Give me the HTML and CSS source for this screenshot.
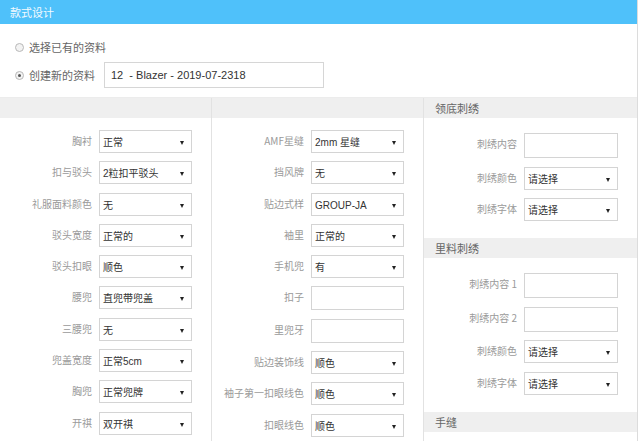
FILE: index.html
```html
<!DOCTYPE html>
<html lang="zh">
<head>
<meta charset="utf-8">
<title>款式设计</title>
<link rel="stylesheet" href="styles.css">
</head>
<body>
<div class="panel">
  <div class="panel-head">款式设计</div>
  <div class="choice-area">
    <div class="radio-row"><span class="radio"></span><span>选择已有的资料</span></div>
    <div class="radio-row second"><span class="radio checked"></span><span>创建新的资料</span><div class="text-input">12&nbsp; - Blazer - 2019-07-2318</div></div>
  </div>
  <div class="columns">
    <div class="col">
      <div class="band"></div>
      <div class="rows">
        <div class="row"><span class="lbl">胸衬</span><div class="sel">正常<i class="arr"></i></div></div>
        <div class="row"><span class="lbl">扣与驳头</span><div class="sel">2粒扣平驳头<i class="arr"></i></div></div>
        <div class="row"><span class="lbl">礼服面料颜色</span><div class="sel">无<i class="arr"></i></div></div>
        <div class="row"><span class="lbl">驳头宽度</span><div class="sel">正常的<i class="arr"></i></div></div>
        <div class="row"><span class="lbl">驳头扣眼</span><div class="sel">顺色<i class="arr"></i></div></div>
        <div class="row"><span class="lbl">腰兜</span><div class="sel">直兜带兜盖<i class="arr"></i></div></div>
        <div class="row"><span class="lbl">三腰兜</span><div class="sel">无<i class="arr"></i></div></div>
        <div class="row"><span class="lbl">兜盖宽度</span><div class="sel">正常5cm<i class="arr"></i></div></div>
        <div class="row"><span class="lbl">胸兜</span><div class="sel">正常兜牌<i class="arr"></i></div></div>
        <div class="row"><span class="lbl">开祺</span><div class="sel">双开祺<i class="arr"></i></div></div>
      </div>
    </div>
    <div class="col">
      <div class="band"></div>
      <div class="rows">
        <div class="row"><span class="lbl">AMF星缝</span><div class="sel">2mm 星缝<i class="arr"></i></div></div>
        <div class="row"><span class="lbl">挡风牌</span><div class="sel">无<i class="arr"></i></div></div>
        <div class="row"><span class="lbl">贴边式样</span><div class="sel">GROUP-JA<i class="arr"></i></div></div>
        <div class="row"><span class="lbl">袖里</span><div class="sel">正常的<i class="arr"></i></div></div>
        <div class="row"><span class="lbl">手机兜</span><div class="sel">有<i class="arr"></i></div></div>
        <div class="row"><span class="lbl">扣子</span><div class="inp"></div></div>
        <div class="row"><span class="lbl">里兜牙</span><div class="inp"></div></div>
        <div class="row"><span class="lbl">贴边装饰线</span><div class="sel">顺色<i class="arr"></i></div></div>
        <div class="row"><span class="lbl">袖子第一扣眼线色</span><div class="sel">顺色<i class="arr"></i></div></div>
        <div class="row"><span class="lbl">扣眼线色</span><div class="sel">顺色<i class="arr"></i></div></div>
      </div>
    </div>
    <div class="col col3">
      <div class="band">领底刺绣</div>
      <div class="rows rows3">
        <div class="row"><span class="lbl">刺绣内容</span><div class="inp tall"></div></div>
        <div class="row"><span class="lbl">刺绣颜色</span><div class="sel">请选择<i class="arr"></i></div></div>
        <div class="row"><span class="lbl">刺绣字体</span><div class="sel">请选择<i class="arr"></i></div></div>
      </div>
      <div class="band">里料刺绣</div>
      <div class="rows rows3">
        <div class="row"><span class="lbl">刺绣内容 1</span><div class="inp tall"></div></div>
        <div class="row"><span class="lbl">刺绣内容 2</span><div class="inp tall"></div></div>
        <div class="row"><span class="lbl">刺绣颜色</span><div class="sel">请选择<i class="arr"></i></div></div>
        <div class="row"><span class="lbl">刺绣字体</span><div class="sel">请选择<i class="arr"></i></div></div>
      </div>
      <div class="band">手缝</div>
    </div>
  </div>
</div>
</body>
</html>
```

FILE: styles.css
```css
html, body {
  margin: 0;
  padding: 0;
  background: #fff;
}
body {
  font-family: "Noto Sans CJK SC", "Liberation Sans", sans-serif;
  color: #555;
  width: 640px;
  height: 441px;
  overflow: hidden;
}
.panel {
  width: 637px;
  border-right: 1px solid #dcdcdc;
  min-height: 441px;
}
.panel-head {
  height: 24px;
  background: #4fc1fa;
  color: #f4fbff;
  font-size: 11px;
  line-height: 24px;
  padding-left: 10px;
}
.choice-area {
  padding: 15px 0 10px 15px;
  height: 48px;
}
.radio-row {
  display: flex;
  align-items: center;
  font-size: 11px;
  color: #666;
  height: 16px;
  line-height: 16px;
}
.radio-row.second {
  margin-top: 7px;
  height: 26px;
}
.radio {
  width: 7px;
  height: 7px;
  border: 1px solid #b8b8b8;
  border-radius: 50%;
  background: #f3f3f3;
  margin-right: 5px;
  box-sizing: content-box;
  position: relative;
}
.radio.checked::after {
  content: "";
  position: absolute;
  left: 2px;
  top: 2px;
  width: 3px;
  height: 3px;
  border-radius: 50%;
  background: #555;
}
.text-input {
  margin-left: 9px;
  width: 212px;
  height: 24px;
  border: 1px solid #d6d6d6;
  font-family: "Liberation Sans", "Noto Sans CJK SC", sans-serif;
  font-size: 11px;
  color: #333;
  line-height: 24px;
  padding-left: 6px;
}
.columns {
  display: flex;
  border-top: 1px solid #ececec;
}
.col {
  width: 211px;
  border-right: 1px solid #e2e2e2;
  min-height: 360px;
}
.col3 {
  flex: 1;
  border-right: none;
}
.band {
  height: 20px;
  background: #efefef;
  font-size: 11px;
  color: #666;
  line-height: 20px;
  padding-left: 11px;
}
.rows {
  display: flex;
  flex-direction: column;
  gap: 8.3px;
  padding-top: 12px;
}
.rows3 {
  gap: 8.5px;
  padding-top: 15px;
  padding-bottom: 17px;
}
.row {
  display: flex;
  align-items: flex-start;
}
.lbl {
  width: 92px;
  text-align: right;
  font-size: 10px;
  color: #9a9a9a;
  line-height: 14px;
  padding-top: 4px;
  white-space: nowrap;
}
.col3 .lbl {
  width: 93px;
}
.sel, .inp {
  margin-left: 7px;
  width: 93px;
  height: 23px;
  box-sizing: border-box;
  border: 1px solid #d4d4d4;
  background: #fff;
  font-size: 10px;
  color: #333;
  line-height: 21px;
  padding-left: 3px;
  position: relative;
}
.sel {
  font-family: "Liberation Sans", "Noto Sans CJK SC", sans-serif;
  padding-top: 1px;
}
.inp {
  height: 24px;
}
.inp.tall {
  height: 25px;
  width: 94px;
}
.col3 .sel {
  width: 94px;
}
.arr {
  position: absolute;
  right: 7px;
  top: 10px;
  width: 0;
  height: 0;
  border-left: 2.5px solid transparent;
  border-right: 2.5px solid transparent;
  border-top: 4px solid #222;
}
```
